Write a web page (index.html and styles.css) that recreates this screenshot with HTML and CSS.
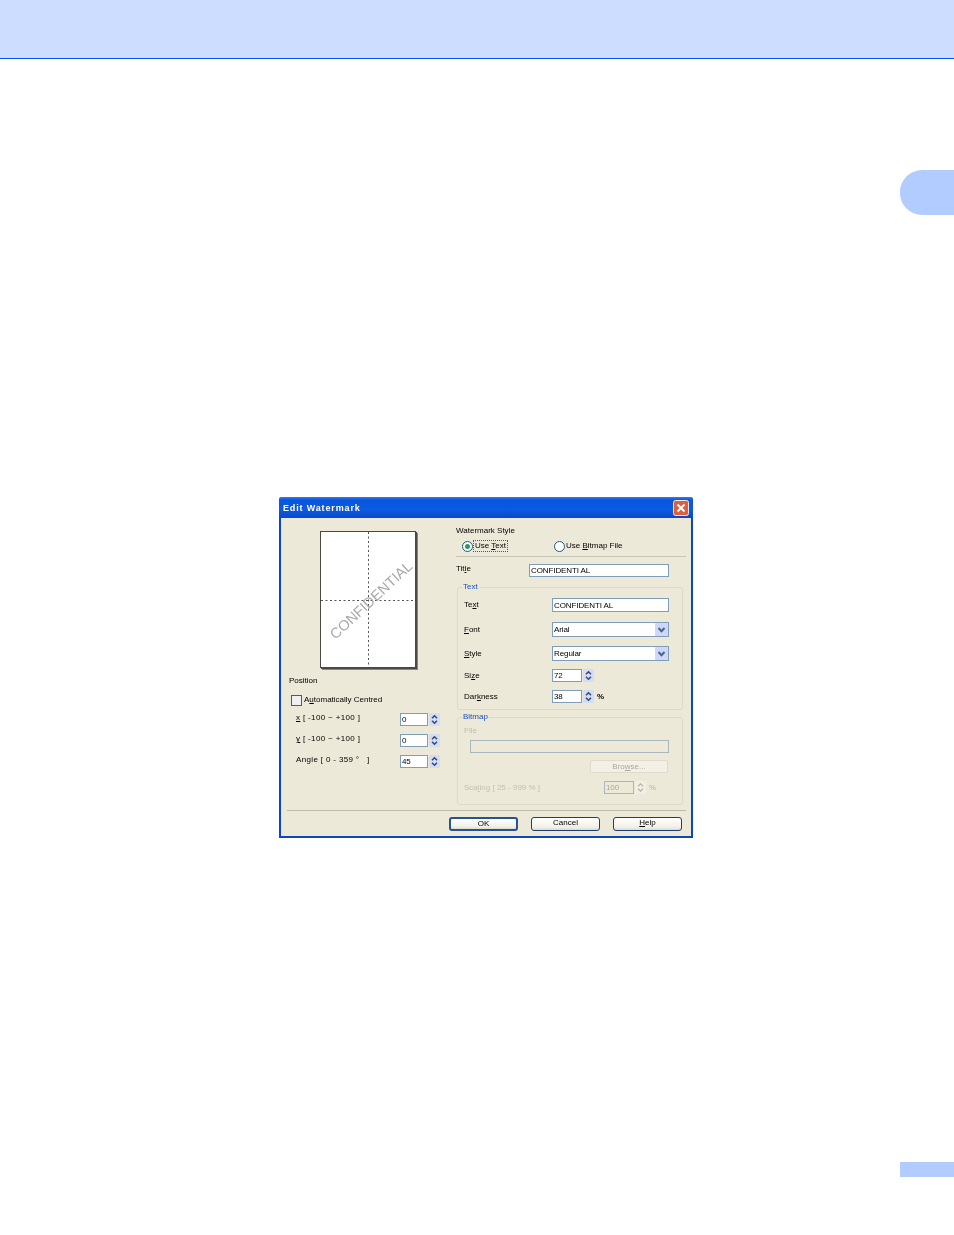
FILE: index.html
```html
<!DOCTYPE html>
<html lang="en">
<head>
<meta charset="utf-8">
<title>Edit Watermark</title>
<link rel="stylesheet" href="styles.css">
</head>
<body>
<svg class="defs" width="0" height="0" aria-hidden="true">
  <symbol id="spin" viewBox="0 0 11 13">
    <rect width="11" height="13" rx="1" fill="#d3ddf6"/>
    <path d="M3 5.2 5.5 2.8 8 5.2M3 7.8 5.5 10.2 8 7.8" fill="none" stroke="#33487a" stroke-width="1.5"/>
  </symbol>
  <symbol id="spin-off" viewBox="0 0 11 13">
    <rect width="11" height="13" rx="1" fill="#f1efe4"/>
    <path d="M3 5.2 5.5 2.8 8 5.2M3 7.8 5.5 10.2 8 7.8" fill="none" stroke="#b5b5a8" stroke-width="1.3"/>
  </symbol>
  <symbol id="drop" viewBox="0 0 13 13">
    <rect width="13" height="13" rx="1" fill="#cdd9f6"/>
    <path d="M3.5 5 6.5 8.2 9.5 5" fill="none" stroke="#4a6296" stroke-width="2"/>
  </symbol>
</svg>

<header class="top-band"></header>
<div class="chapter-tab"></div>

<main class="dialog">
  <div class="titlebar">
    <span class="title-text">Edit Watermark</span>
    <svg class="close" viewBox="0 0 16 16" width="16" height="16">
      <rect x=".5" y=".5" width="15" height="15" rx="2" fill="#dc5f3e" stroke="#f4e8e2"/>
      <path d="M4.5 4.5 11.5 11.5M11.5 4.5 4.5 11.5" stroke="#fff" stroke-width="2"/>
    </svg>
  </div>
  <div class="client">
    <div class="main">
      <section class="left">
        <div class="page">
          <svg viewBox="0 0 94 135" width="94" height="135">
            <path d="M47.5 0V135M0 68.5H94" stroke="#555" stroke-width="1" stroke-dasharray="2 2.5" fill="none"/>
            <text class="wm" transform="translate(50 68) rotate(-43)" text-anchor="middle" y="5">CONFIDENTIAL</text>
          </svg>
        </div>
        <div class="label position-label">Position</div>
        <div class="check-row">
          <span class="checkbox"></span>
          <span class="label">A<u>u</u>tomatically Centred</span>
        </div>
        <div class="spin-row">
          <span class="label spin-label"><u>x</u> [ -100 ~ +100 ]</span>
          <span class="input small">0</span>
          <svg class="spin"><use href="#spin"/></svg>
        </div>
        <div class="spin-row">
          <span class="label spin-label"><u>y</u> [ -100 ~ +100 ]</span>
          <span class="input small">0</span>
          <svg class="spin"><use href="#spin"/></svg>
        </div>
        <div class="spin-row">
          <span class="label spin-label">Angle [ 0 - 359 °&nbsp;&nbsp; ]</span>
          <span class="input small">45</span>
          <svg class="spin"><use href="#spin"/></svg>
        </div>
      </section>

      <section class="right">
        <div class="label heading">Watermark Style</div>
        <div class="radio-row">
          <div class="radio-group first">
            <span class="radio checked"></span>
            <span class="label focus">Use <u>T</u>ext</span>
          </div>
          <div class="radio-group">
            <span class="radio"></span>
            <span class="label">Use <u>B</u>itmap File</span>
          </div>
        </div>
        <div class="rule"></div>
        <div class="title-row">
          <span class="label title-label">Tit<u>l</u>e</span>
          <span class="input title-input">CONFIDENTI AL</span>
        </div>

        <fieldset class="group text-group">
          <legend>Text</legend>
          <div class="row h14">
            <span class="label row-label">Te<u>x</u>t</span>
            <span class="input wide">CONFIDENTI AL</span>
          </div>
          <div class="row h15 gap10">
            <span class="label row-label"><u>F</u>ont</span>
            <span class="input wide select">Arial<svg class="drop"><use href="#drop"/></svg></span>
          </div>
          <div class="row h15 gap9">
            <span class="label row-label"><u>S</u>tyle</span>
            <span class="input wide select">Regular<svg class="drop"><use href="#drop"/></svg></span>
          </div>
          <div class="row h13 gap8">
            <span class="label row-label">Si<u>z</u>e</span>
            <span class="input medium">72</span>
            <svg class="spin"><use href="#spin"/></svg>
          </div>
          <div class="row h13 gap8">
            <span class="label row-label">Dar<u>k</u>ness</span>
            <span class="input medium">38</span>
            <svg class="spin"><use href="#spin"/></svg>
            <span class="label percent">%</span>
          </div>
        </fieldset>

        <fieldset class="group bitmap-group">
          <legend>Bitmap</legend>
          <div class="label disabled file-label">File</div>
          <div class="input disabled-input file-input"></div>
          <div class="browse">Bro<u>w</u>se...</div>
          <div class="row h13 gap8">
            <span class="label disabled scale-label">Sca<u>l</u>ing [ 25 - 999 % ]</span>
            <span class="input medium disabled-input off-text">100</span>
            <svg class="spin"><use href="#spin-off"/></svg>
            <span class="label disabled percent">%</span>
          </div>
        </fieldset>
      </section>
    </div>

    <div class="footer-rule"></div>
    <div class="buttons">
      <button class="btn default">OK</button>
      <button class="btn">Cancel</button>
      <button class="btn"><u>H</u>elp</button>
    </div>
  </div>
</main>

<div class="page-number"></div>
</body>
</html>
```
FILE: styles.css
```css
* { box-sizing: border-box; }

html, body {
  margin: 0;
  padding: 0;
  background: #fff;
}

body {
  position: relative;
  height: 1235px;
  overflow: hidden;
  font-family: "Liberation Sans", Arial, sans-serif;
  color: #000;
}

.defs { position: absolute; }

.top-band {
  height: 59px;
  background: #ccddff;
  border-bottom: 1px solid #0a50ff;
}

.chapter-tab {
  position: absolute;
  top: 170px;
  right: 0;
  width: 54px;
  height: 45px;
  background: #b3ccff;
  border-radius: 22px 0 0 22px;
}

.page-number {
  position: absolute;
  top: 1162px;
  right: 0;
  width: 54px;
  height: 15px;
  background: #b3ccff;
}

.dialog {
  display: flex;
  flex-direction: column;
  width: 414px;
  height: 341px;
  margin: 438px 0 0 279px;
  filter: blur(0.5px);
}

.titlebar {
  display: flex;
  align-items: center;
  justify-content: space-between;
  height: 21px;
  padding: 0 4px 0 4px;
  background: linear-gradient(#2f7df0 0, #0a55de 3px, #0b5ae2 60%, #0a47c8 100%);
  border-radius: 2px 2px 0 0;
}

.title-text {
  color: #fff;
  font-size: 9px;
  font-weight: bold;
  letter-spacing: 0.85px;
}

.close { display: block; }

.client {
  flex: 1;
  display: flex;
  flex-direction: column;
  background: #ece9d8;
  border: 2px solid #1044c4;
  border-top: 0;
}

.main {
  display: flex;
  height: 292px;
}

.left {
  width: 175px;
  padding-top: 13px;
}

.right {
  width: 230px;
  padding-top: 8px;
}

.label {
  display: block;
  font-size: 8px;
  line-height: 10px;
  white-space: nowrap;
}

.disabled { color: #c2c1b4; }

.page {
  width: 96px;
  height: 137px;
  margin-left: 39px;
  background: #fff;
  border: 1px solid #4a4a44;
  box-shadow: 1px 1px 0 #4a4a44, 2px 2px 0 #8a887c;
}

.page svg { display: block; }

.wm {
  font-family: "Liberation Sans", Arial, sans-serif;
  font-size: 14.5px;
  fill: #a8a8a8;
}

.position-label { margin: 8px 0 0 8px; }

.check-row {
  display: flex;
  align-items: center;
  gap: 2px;
  height: 12px;
  margin: 8px 0 0 10px;
}

.checkbox {
  width: 11px;
  height: 11px;
  background: #eef0f2;
  border: 1px solid #3f5f86;
}

.spin-row {
  display: flex;
  height: 13px;
  margin: 8px 0 0 15px;
}

.check-row + .spin-row { margin-top: 7px; }

.spin-label {
  width: 104px;
  letter-spacing: 0.35px;
}

.input {
  display: flex;
  align-items: center;
  padding-left: 1px;
  font-size: 8px;
  letter-spacing: -0.1px;
  background: #fff;
  border: 1px solid #7f9db9;
  white-space: nowrap;
}

.small { width: 28px; height: 13px; }
.medium { width: 30px; height: 13px; }
.wide { width: 117px; height: 100%; }

.spin {
  display: block;
  width: 11px;
  height: 13px;
  margin-left: 1px;
}

.heading { height: 10px; }

.radio-row {
  display: flex;
  height: 12px;
  margin: 4px 0 0 6px;
}

.radio-group {
  display: flex;
  align-items: center;
  gap: 1px;
}

.radio-group.first { width: 92px; }

.radio {
  display: flex;
  align-items: center;
  justify-content: center;
  width: 11px;
  height: 11px;
  background: #fff;
  border: 1px solid #1d5a78;
  border-radius: 50%;
}

.radio.checked::after {
  content: "";
  width: 5px;
  height: 5px;
  background: #2f9a55;
  border-radius: 50%;
}

.focus {
  padding: 0 1px;
  outline: 1px dotted #555;
  outline-offset: 0;
}

.rule {
  height: 1px;
  margin-top: 4px;
  background: #c8c6b6;
}

.title-row {
  display: flex;
  height: 13px;
  margin-top: 7px;
}

.title-label { width: 73px; }
.title-input { width: 140px; height: 13px; }

.group {
  width: 226px;
  margin: 0 0 0 1px;
  border: 1px solid #dcd9c8;
  border-radius: 3px;
}

.group legend {
  margin-left: -2px;
  padding: 0 1px;
  font-size: 8px;
  line-height: 10px;
  color: #1c4fb8;
}

.text-group {
  margin-top: 5px;
  padding: 6px 6px 6px 6px;
}

.bitmap-group {
  margin-top: 2px;
  padding: 4px 6px 10px 6px;
}

.row {
  display: flex;
  align-items: center;
}

.h13 { height: 13px; }
.h14 { height: 14px; }
.h15 { height: 15px; }
.gap8 { margin-top: 8px; }
.gap9 { margin-top: 9px; }
.gap10 { margin-top: 10px; }

.row-label { width: 88px; }

.select {
  justify-content: space-between;
  padding-right: 0;
}

.drop {
  display: block;
  width: 13px;
  height: 13px;
}

.percent {
  margin-left: 3px;
  font-weight: bold;
}

.file-label { margin-bottom: 4px; }

.disabled-input {
  background: #ece9d8;
  border-color: #a9b6bd;
}

.off-text { color: #a8a89c; }

.file-input {
  width: 199px;
  height: 13px;
  margin-left: 6px;
}

.browse {
  width: 78px;
  height: 13px;
  margin: 7px 0 0 126px;
  font-size: 8px;
  line-height: 11px;
  text-align: center;
  color: #a9a89b;
  background: #f3f1e6;
  border: 1px solid #dedbcc;
  border-radius: 2px;
}

.scale-label { width: 140px; }

.footer-rule {
  height: 1px;
  margin: 0 5px 0 6px;
  background: #bdbbab;
}

.buttons {
  display: flex;
  gap: 13px;
  margin: 6px 0 0 168px;
}

.btn {
  width: 69px;
  height: 14px;
  padding: 0 0 2px;
  font-family: inherit;
  font-size: 8px;
  line-height: 10px;
  color: #000;
  background: linear-gradient(#fff, #f0efe6 80%, #dcd8c8);
  border: 1px solid #1d3f70;
  border-radius: 3px;
}

.btn.default {
  border: 2px solid #27548f;
}
```
